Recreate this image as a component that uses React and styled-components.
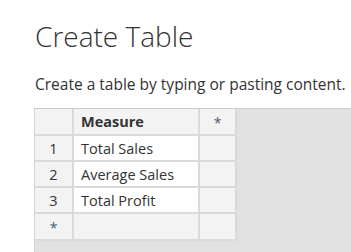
import React from 'react'
import styled, { createGlobalStyle } from 'styled-components'

const GlobalStyle = createGlobalStyle`
    html, body {
        margin: 0;
        padding: 0;
        background: #ffffff;
        font-family: "Open Sans", "Segoe UI", sans-serif;
        color: #333333;
    }
`

const Page = styled.div`
    width: 351px;
    height: 252px;
    overflow: hidden;
    display: flex;
    flex-direction: column;
`

const Header = styled.header`
    padding: 17px 0 0 35px;
    &>h1{
        margin: 0;
        font-size: 28px;
        font-weight: 300;
        line-height: 38px;
        color: #333;
    }
    &>p{
        margin: 18px 0 0;
        font-size: 15.5px;
        line-height: 22px;
        color: #333;
        white-space: nowrap;
    }
`

const Panel = styled.section`
    margin: 13px 0 0 34px;
    flex: 1;
    background: #e1e1e1;
    border-top: 1px solid #cccccc;
    border-left: 1px solid #d4d4d4;
`

const Grid = styled.div`
    display: grid;
    grid-template-columns: 39px 126px 37px;
    grid-template-rows: 27px 26px 26px 26px 27px;
    width: 202px;
`

const Cell = styled.div`
    display: flex;
    align-items: center;
    justify-content: ${p => p.$center ? 'center' : 'flex-start'};
    padding-left: ${p => p.$center ? '0' : '7px'};
    background: ${p => p.$white ? '#ffffff' : '#f3f3f3'};
    border-right: 2px solid #dadada;
    border-bottom: 2px solid #dadada;
    font-size: 14.5px;
    font-weight: ${p => p.$bold ? 700 : 400};
    color: #333;
    white-space: nowrap;
`

const Star = styled.span`
    font-size: 14px;
    color: #4a5a70;
    margin-top: 2px;
`

const rows = ['Total Sales', 'Average Sales', 'Total Profit']

const App = () => {
    return (
        <Page>
            <GlobalStyle />
            <Header>
                <h1>Create Table</h1>
                <p>Create a table by typing or pasting content.</p>
            </Header>
            <Panel>
                <Grid>
                    <Cell $center />
                    <Cell $bold>Measure</Cell>
                    <Cell $center><Star>*</Star></Cell>
                    {rows.map((name, i) => (
                        <React.Fragment key={name}>
                            <Cell $center>{i + 1}</Cell>
                            <Cell $white>{name}</Cell>
                            <Cell />
                        </React.Fragment>
                    ))}
                    <Cell $center><Star>*</Star></Cell>
                    <Cell />
                    <Cell />
                </Grid>
            </Panel>
        </Page>
    )
}

export default App
